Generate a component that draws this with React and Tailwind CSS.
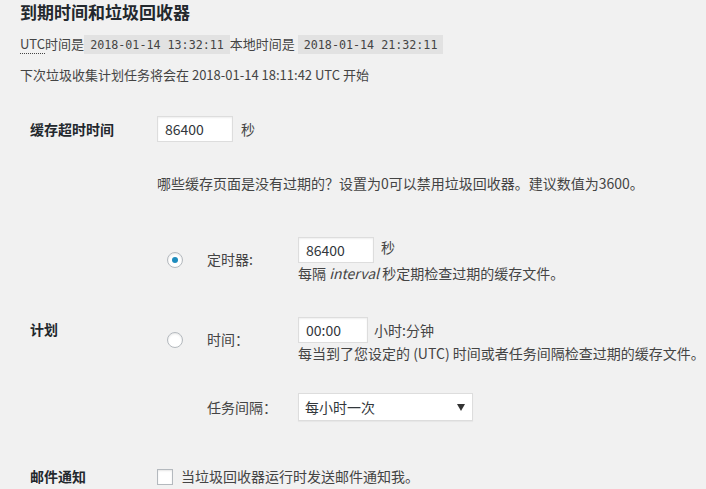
const FONT = "font-['Noto_Sans_CJK_SC','Noto_Sans',sans-serif]";

function TextInput({ value, width }) {
  return (
    <div
      className={`h-[26px] bg-white border border-[#dddddd] shadow-[inset_0_1px_2px_rgba(0,0,0,0.07)] pl-[7px] flex items-center text-[14px] text-[#32373c] ${width}`}
    >
      {value}
    </div>
  );
}

function Radio({ checked }) {
  return (
    <span className="w-[16px] h-[16px] rounded-full bg-white border border-[#b4b9be] shadow-[inset_0_1px_2px_rgba(0,0,0,0.1)] flex items-center justify-center">
      {checked && <span className="w-[6px] h-[6px] rounded-full bg-[#1e8cbe]" />}
    </span>
  );
}

function Code({ children }) {
  return (
    <code className="bg-[#e2e2e2] px-[6px] pt-[3px] pb-[2px] font-['DejaVu_Sans_Mono',monospace] text-[11.7px] text-[#444]">
      {children}
    </code>
  );
}

export default function App() {
  return (
    <div className={`${FONT} bg-[#f1f1f1] min-h-screen pl-[20px] text-[13px] text-[#444] overflow-hidden`}>
      <h2 className="h-[24px] leading-[24px] text-[17px] font-bold text-[#23282d]">到期时间和垃圾回收器</h2>

      <p className="mt-[10px] h-[20px] leading-[20px]">
        <abbr className="no-underline border-b border-dotted border-[#444]" title="Coordinated Universal Time">
          UTC
        </abbr>
        时间是<Code>2018-01-14 13:32:11</Code>本地时间是 <Code>2018-01-14 21:32:11</Code>
      </p>

      <p className="mt-[11px] h-[20px] leading-[20px]">下次垃圾收集计划任务将会在 2018-01-14 18:11:42 UTC 开始</p>

      <div className="text-[14px]">
        {/* 缓存超时时间 */}
        <div className="mt-[31px] flex items-center">
          <div className="w-[137px] pl-[10px] font-bold text-[#23282d]">缓存超时时间</div>
          <TextInput value="86400" width="w-[76px]" />
          <span className="ml-[8px]">秒</span>
        </div>
        <p className="mt-[31px] ml-[137px] h-[20px] leading-[20px]">
          哪些缓存页面是没有过期的？设置为0可以禁用垃圾回收器。建议数值为3600。
        </p>

        {/* 计划 */}
        <div className="mt-[44px] flex items-center">
          <div className="w-[137px] pl-[10px] font-bold text-[#23282d]">计划</div>
          <div className="flex flex-col">
            <div className="flex items-center">
              <div className="w-[50px] pl-[10px]">
                <Radio checked />
              </div>
              <div className="w-[91px]">定时器:</div>
              <div>
                <div className="flex items-center">
                  <TextInput value="86400" width="w-[76px]" />
                  <span className="ml-[7px] -mt-[6px]">秒</span>
                </div>
                <div className="h-[18px] leading-[18px] mt-[1px]">
                  每隔 <em className="italic">interval</em> 秒定期检查过期的缓存文件。
                </div>
              </div>
            </div>

            <div className="flex items-center mt-[35px]">
              <div className="w-[50px] pl-[10px]">
                <Radio />
              </div>
              <div className="w-[91px]">时间：</div>
              <div>
                <div className="flex items-center">
                  <TextInput value="00:00" width="w-[70px]" />
                  <span className="ml-[6px]">小时:分钟</span>
                </div>
                <div className="h-[18px] leading-[18px] mt-[1px] whitespace-nowrap">
                  每当到了您设定的 (UTC) 时间或者任务间隔检查过期的缓存文件。
                </div>
              </div>
            </div>

            <div className="flex items-center mt-[31px]">
              <div className="w-[50px]" />
              <div className="w-[91px]">任务间隔：</div>
              <div className="w-[175px] h-[28px] bg-white border border-[#dddddd] shadow-[0_1px_1px_rgba(0,0,0,0.04)] flex items-center justify-between pl-[6px] pr-[7px] text-[14px] text-[#32373c]">
                <span>每小时一次</span>
                <svg width="8" height="7" viewBox="0 0 8 7">
                  <path d="M0 0 H8 L4 7 Z" fill="#333" />
                </svg>
              </div>
            </div>
          </div>
        </div>

        {/* 邮件通知 */}
        <div className="mt-[45px] flex items-center">
          <div className="w-[137px] pl-[10px] font-bold text-[#23282d]">邮件通知</div>
          <span className="w-[16px] h-[16px] bg-white border border-[#b4b9be] shadow-[inset_0_1px_2px_rgba(0,0,0,0.1)]" />
          <span className="ml-[8px]">当垃圾回收器运行时发送邮件通知我。</span>
        </div>
      </div>
    </div>
  );
}
